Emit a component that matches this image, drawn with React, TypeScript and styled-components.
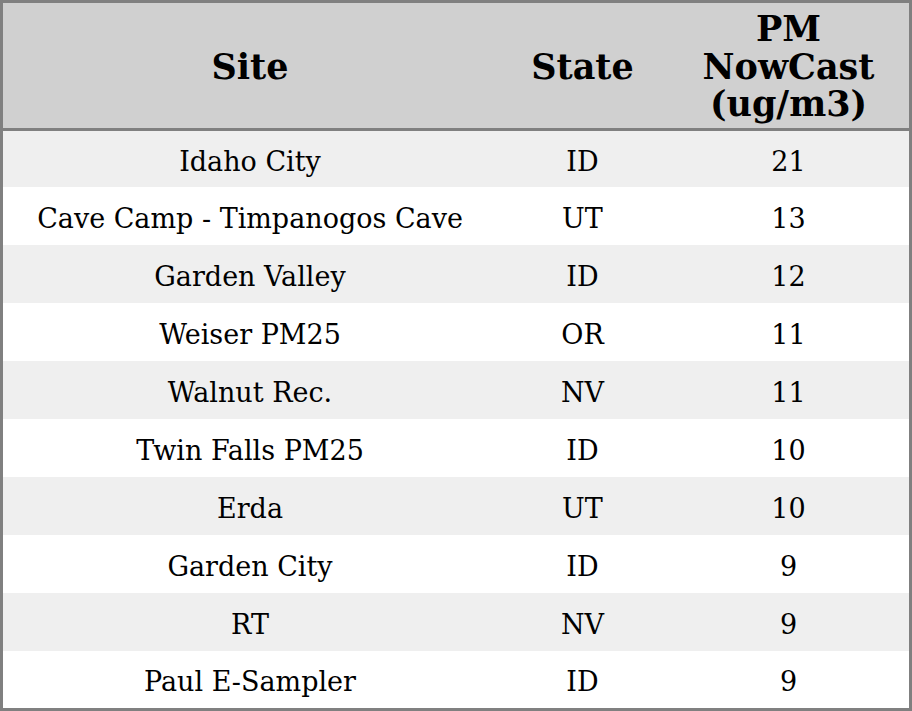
import React from "react";
import styled, { createGlobalStyle } from "styled-components";

const Global = createGlobalStyle`
  html, body { margin: 0; padding: 0; background: #ffffff; }
  body { font-family: "DejaVu Serif", "Liberation Serif", serif; color: #000; }
`;

const Frame = styled.div`
  width: 912px;
  height: 711px;
  box-sizing: border-box;
  border: 3px solid #808080;
  display: flex;
  flex-direction: column;
  overflow: hidden;
`;

const Cols = "494px 171px 1fr";

const HeaderRow = styled.div`
  display: grid;
  grid-template-columns: ${Cols};
  height: 125px;
  background: #d0d0d0;
  border-bottom: 3px solid #808080;
`;

const HeadCell = styled.div`
  display: flex;
  align-items: center;
  justify-content: center;
  text-align: center;
  font-weight: bold;
  font-size: 35px;
  line-height: 37.5px;
  padding-top: 2px;
`;

const BodyRow = styled.div<{ $striped: boolean; $h: number }>`
  display: grid;
  grid-template-columns: ${Cols};
  height: ${(p) => p.$h}px;
  background: ${(p) => (p.$striped ? "#efefef" : "#ffffff")};
`;

const Cell = styled.div`
  display: flex;
  align-items: center;
  justify-content: center;
  text-align: center;
  font-size: 27px;
  white-space: nowrap;
  padding-top: 4px;
`;

const rows: [string, string, number][] = [
  ["Idaho City", "ID", 21],
  ["Cave Camp - Timpanogos Cave", "UT", 13],
  ["Garden Valley", "ID", 12],
  ["Weiser PM25", "OR", 11],
  ["Walnut Rec.", "NV", 11],
  ["Twin Falls PM25", "ID", 10],
  ["Erda", "UT", 10],
  ["Garden City", "ID", 9],
  ["RT", "NV", 9],
  ["Paul E-Sampler", "ID", 9],
];

export default function App() {
  return (
    <>
      <Global />
      <Frame>
        <HeaderRow>
          <HeadCell>Site</HeadCell>
          <HeadCell>State</HeadCell>
          <HeadCell>
            PM
            <br />
            NowCast
            <br />
            (ug/m3)
          </HeadCell>
        </HeaderRow>
        {rows.map(([site, state, value], i) => (
          <BodyRow
            key={site}
            $striped={i % 2 === 0}
            $h={i === 0 ? 56 : i === rows.length - 1 ? 57 : 58}
          >
            <Cell>{site}</Cell>
            <Cell>{state}</Cell>
            <Cell>{value}</Cell>
          </BodyRow>
        ))}
      </Frame>
    </>
  );
}
